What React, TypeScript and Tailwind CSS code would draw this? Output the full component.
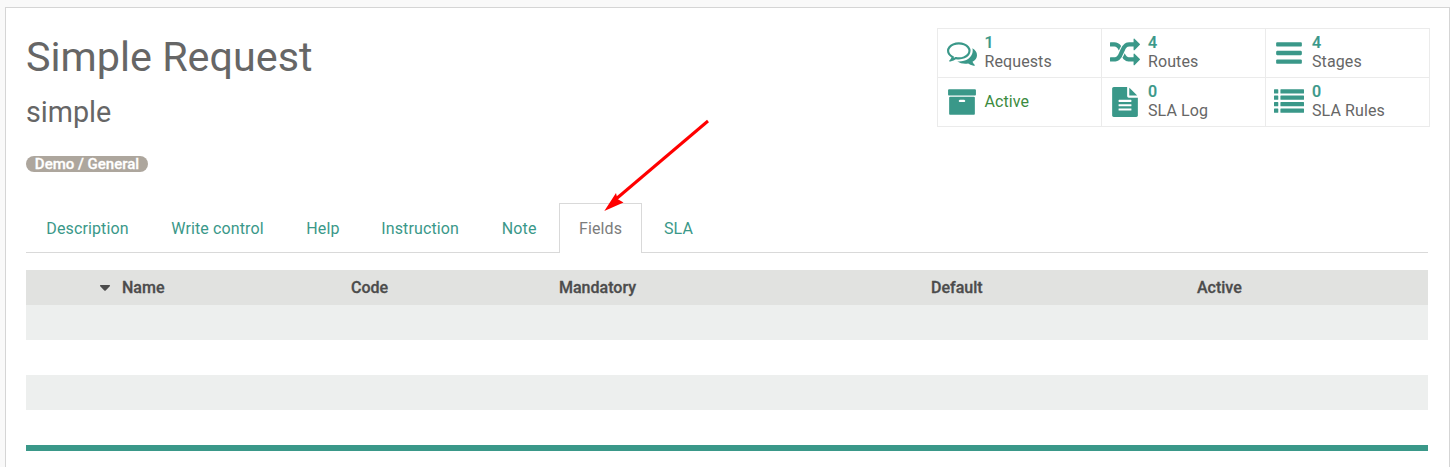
import type { ReactNode } from 'react';

const ICONS = {
  comments:
    'M704 384q-153 0-286 52t-211.500 141-78.500 191q0 82 53 158t149 132l97 56-35 84q34-20 62-39l44-31 53 10q78 14 153 14 153 0 286-52t211.500-141 78.500-191-78.500-191-211.500-141-286-52zm0-128q191 0 353.500 68.500t256.500 186.500 94 257-94 257-256.500 186.500-353.500 68.500q-86 0-176-16-124 88-278 128-36 9-86 16h-3q-11 0-20.500-8t-11.500-21q-1-3-1-6.500t.5-6.500 2-6l2.500-5 3.500-5.500 4-5 4.500-5 4-4.500q5-6 23-25t26-29.500 22.500-29 25-38.500 20.500-44q-124-72-195-177t-71-224q0-139 94-257t256.500-186.500 353.500-68.500zm822 1169q10 24 20.500 44t25 38.500 22.500 29 26 29.500 23 25q1 1 4 4.500t4.500 5 4 5 3.500 5.500l2.500 5 2 6 .5 6.500-1 6.500q-3 14-13 22t-22 7q-50-7-86-16-154-40-278-128-90 16-176 16-271 0-472-132 58 4 88 4 161 0 309-45t264-129q125-92 192-212t67-254q0-77-23-152 129 71 204 178t75 230q0 120-71 224.500t-195 176.500z',
  random:
    'M666 481q-60 92-137 273-22-45-37-72.500t-40.500-63.500-51-56.500-63-35-81.500-14.500h-224q-14 0-23-9t-9-23v-192q0-14 9-23t23-9h224q250 0 410 225zm1126 799q0 14-9 23l-320 320q-9 9-23 9-13 0-22.500-9.500t-9.500-22.500v-192q-32 0-85 .5t-81 1-73-1-71-5-64-10.500-63-18.500-58-28.500-59-40-55-53.500-56-69.500q59-93 136-273 22 45 37 72.500t40.500 63.500 51 56.500 63 35 81.500 14.500h256v-192q0-14 9-23t23-9q12 0 24 10l319 319q9 9 9 23zm0-896q0 14-9 23l-320 320q-9 9-23 9-13 0-22.500-9.500t-9.500-22.500v-192h-256q-48 0-87 15t-69 45-51 61.500-45 77.500q-32 62-78 171-29 66-49.500 111t-54 105-64 100-74 83-90 68.500-106.500 42-128 16.500h-224q-14 0-23-9t-9-23v-192q0-14 9-23t23-9h224q48 0 87-15t69-45 51-61.500 45-77.500q32-62 78-171 29-66 49.500-111t54-105 64-100 74-83 90-68.500 106.500-42 128-16.500h256v-192q0-14 9-23t23-9q12 0 24 10l319 319q9 9 9 23z',
  bars:
    'M1664 1344v128q0 26-19 45t-45 19h-1408q-26 0-45-19t-19-45v-128q0-26 19-45t45-19h1408q26 0 45 19t19 45zm0-512v128q0 26-19 45t-45 19h-1408q-26 0-45-19t-19-45v-128q0-26 19-45t45-19h1408q26 0 45 19t19 45zm0-512v128q0 26-19 45t-45 19h-1408q-26 0-45-19t-19-45v-128q0-26 19-45t45-19h1408q26 0 45 19t19 45z',
  archive:
    'M1088 832q0-26-19-45t-45-19h-256q-26 0-45 19t-19 45 19 45 45 19h256q26 0 45-19t19-45zm576-192v960q0 26-19 45t-45 19h-1408q-26 0-45-19t-19-45v-960q0-26 19-45t45-19h1408q26 0 45 19t19 45zm64-448v256q0 26-19 45t-45 19h-1536q-26 0-45-19t-19-45v-256q0-26 19-45t45-19h1536q26 0 45 19t19 45z',
  file:
    'M1596 476q14 14 28 36h-472v-472q22 14 36 28zm-476 164h544v1056q0 40-28 68t-68 28h-1344q-40 0-68-28t-28-68v-1600q0-40 28-68t68-28h800v544q0 40 28 68t68 28zm160 736v-64q0-14-9-23t-23-9h-704q-14 0-23 9t-9 23v64q0 14 9 23t23 9h704q14 0 23-9t9-23zm0-256v-64q0-14-9-23t-23-9h-704q-14 0-23 9t-9 23v64q0 14 9 23t23 9h704q14 0 23-9t9-23zm0-256v-64q0-14-9-23t-23-9h-704q-14 0-23 9t-9 23v64q0 14 9 23t23 9h704q14 0 23-9t9-23z',
  list:
    'M32 1280h192q32 0 32 32v192q0 32-32 32h-192q-32 0-32-32v-192q0-32 32-32zM32 896h192q32 0 32 32v192q0 32-32 32h-192q-32 0-32-32v-192q0-32 32-32zM32 512h192q32 0 32 32v192q0 32-32 32h-192q-32 0-32-32v-192q0-32 32-32zM32 128h192q32 0 32 32v192q0 32-32 32h-192q-32 0-32-32v-192q0-32 32-32zM416 1280h1344q32 0 32 32v192q0 32-32 32h-1344q-32 0-32-32v-192q0-32 32-32zM416 896h1344q32 0 32 32v192q0 32-32 32h-1344q-32 0-32-32v-192q0-32 32-32zM416 512h1344q32 0 32 32v192q0 32-32 32h-1344q-32 0-32-32v-192q0-32 32-32zM416 128h1344q32 0 32 32v192q0 32-32 32h-1344q-32 0-32-32v-192q0-32 32-32z',
};

function Stat({ icon, children }: { icon: keyof typeof ICONS; children: ReactNode }) {
  const first = icon === 'comments' || icon === 'archive';
  return (
    <div
      className={`flex h-[49px] w-[164px] items-center gap-2 border-t border-l border-[#ebebeb] ${first ? 'pl-[8.500px]' : 'pl-2'}`}
    >
      <svg viewBox="0 0 1792 1792" className="size-[30px] shrink-0 fill-[#3a9889]">
        <path d={ICONS[icon]} />
      </svg>
      <div className="text-base leading-[18px] tracking-[0.1px]">{children}</div>
    </div>
  );
}

function Count({ icon, value, label }: { icon: keyof typeof ICONS; value: number; label: string }) {
  return (
    <Stat icon={icon}>
      <div className="-mt-px mb-px font-medium text-[#3a9889] [-webkit-text-stroke:0.2px]">{value}</div>
      <div>{label}</div>
    </Stat>
  );
}

const TABS = [
  { label: 'Description', width: 'w-[125px]' },
  { label: 'Write control', width: 'w-[135px]' },
  { label: 'Help', width: 'w-[75px]' },
  { label: 'Instruction', width: 'w-[120.5px]' },
  { label: 'Note', width: 'w-[78.500px]' },
  { label: 'Fields', width: 'w-[83px]', active: true },
  { label: 'SLA', width: 'w-[73px]' },
];

export default function App() {
  return (
    <div className="h-[467px] overflow-hidden bg-[#f9f9f9] pt-[7px] pl-[5px] font-['Roboto',sans-serif] text-base text-[#666666]">
      <main className="h-[480px] w-[1445px] border border-[#d5d5d5] bg-white pt-5 pr-[19px] pl-5">
        <header className="flex h-[175px] justify-between">
          <div>
            <h1 className="mt-[5px] text-[41.300px] leading-[48px]">Simple Request</h1>
            <h2 className="mt-[14px] text-[28.700px] leading-[34px]">simple</h2>
            <div className="mt-[27px] flex h-4 w-[122px] items-center justify-center rounded-full bg-[#ada69d] text-[15px] leading-4 font-medium text-white [-webkit-text-stroke:0.3px]">
              Demo / General
            </div>
          </div>
          <div className="grid h-[99px] w-[493px] grid-cols-[164px_164px_164px] border-r border-b border-[#ebebeb]">
            <Count icon="comments" value={1} label="Requests" />
            <Count icon="random" value={4} label="Routes" />
            <Count icon="bars" value={4} label="Stages" />
            <Stat icon="archive">
              <span className="text-[#3c8b40]">Active</span>
            </Stat>
            <Count icon="file" value={0} label="SLA Log" />
            <Count icon="list" value={0} label="SLA Rules" />
          </div>
        </header>

        <div className="relative w-[1402px]">
          <nav className="flex h-[50px] border-b border-[#d9d9d9] tracking-[0.12px]">
            {TABS.map((tab, i) => (
              <div
                key={tab.label}
                className={
                  tab.active
                    ? `relative -ml-px h-[50px] border border-b-0 border-[#d9d9d9] bg-white pt-[15px] pl-[19px] leading-5 text-[#7c7c7c] ${tab.width}`
                    : `h-[49px] pt-4 leading-5 text-[#3a9889] ${i === 6 ? 'pl-[22px]' : 'pl-[20.300px]'} ${tab.width}`
                }
              >
                {tab.label}
              </div>
            ))}
          </nav>
          <svg className="absolute top-[-85px] left-[576px]" width="110" height="95" viewBox="0 0 110 95">
            <path d="M106 3 14 81" stroke="#ff0000" strokeWidth="3" />
            <path d="M2.300 93 14 75 15.500 81 21.500 84.500Z" fill="#ff0000" />
          </svg>
        </div>

        <table className="mt-[17px] w-[1402px] table-fixed border-collapse text-left text-base">
          <colgroup>
            <col className="w-[96px]" />
            <col className="w-[229px]" />
            <col className="w-[208px]" />
            <col className="w-[372px]" />
            <col className="w-[266px]" />
            <col className="w-[231px]" />
          </colgroup>
          <thead>
            <tr className="h-[35px] bg-[#e1e2e0] text-[#4c4c4c] [-webkit-text-stroke:0.3px]">
              <th>
                <svg className="ml-[73px]" width="12" height="8" viewBox="0 0 12 8">
                  <path d="M1.500 1h9q1 .5 .3 1.200L6.700 6.500q-.7.600-1.400 0L1.200 2.200q-.7-.8.300-1.200z" fill="currentColor" />
                </svg>
              </th>
              <th className="font-medium">Name</th>
              <th className="font-medium">Code</th>
              <th className="font-medium">Mandatory</th>
              <th className="font-medium">Default</th>
              <th className="font-medium">Active</th>
            </tr>
          </thead>
          <tbody>
            {[0, 1, 2, 3].map((row) => (
              <tr key={row} className="h-[35px] odd:bg-[#edefee]">
                <td colSpan={6} />
              </tr>
            ))}
          </tbody>
        </table>
        <div className="h-1.5 w-[1402px] bg-[#3a9889]" />
      </main>
    </div>
  );
}
